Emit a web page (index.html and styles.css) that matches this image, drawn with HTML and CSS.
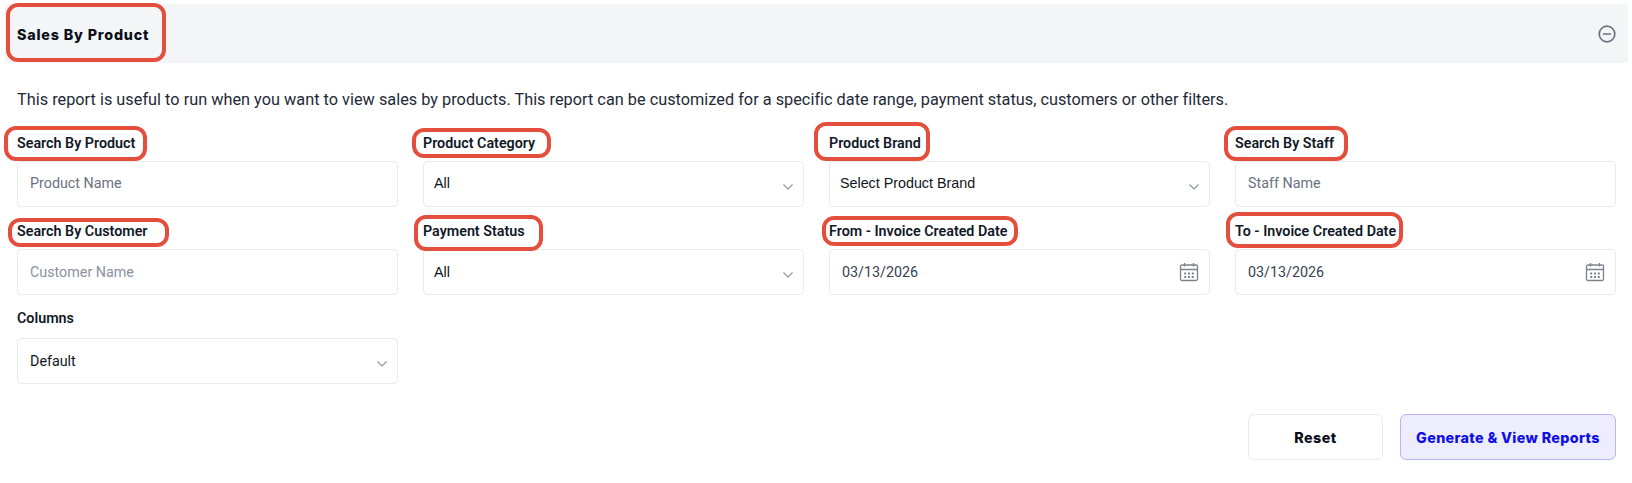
FILE: index.html
```html
<!DOCTYPE html>
<html lang="en">
<head>
<meta charset="utf-8">
<title>Sales By Product</title>
<link rel="stylesheet" href="styles.css">
</head>
<body>
<div class="page">
  <header class="panel-head">
    <h2 class="panel-title">Sales By Product</h2>
    <svg class="collapse-icon" viewBox="0 0 18 18" width="18" height="18" aria-hidden="true"><circle cx="9" cy="9" r="7.8"/><path d="M5.6 9h6.8"/></svg>
  </header>
  <p class="intro">This report is useful to run when you want to view sales by products. This report can be customized for a specific date range, payment status, customers or other filters.</p>
  <form class="filters">
    <div class="field row-one">
      <label class="field-label">Search By Product</label>
      <div class="control placeholder">Product Name</div>
    </div>
    <div class="field row-one">
      <label class="field-label">Product Category</label>
      <div class="control select arial">All
        <svg class="chevron" viewBox="0 0 12 8" width="12" height="8"><path d="M1.5 1.5 6 6l4.5-4.5"/></svg>
      </div>
    </div>
    <div class="field row-one">
      <label class="field-label">Product Brand</label>
      <div class="control select arial">Select Product Brand
        <svg class="chevron" viewBox="0 0 12 8" width="12" height="8"><path d="M1.5 1.5 6 6l4.5-4.5"/></svg>
      </div>
    </div>
    <div class="field row-one">
      <label class="field-label">Search By Staff</label>
      <div class="control placeholder">Staff Name</div>
    </div>
    <div class="field row-two">
      <label class="field-label">Search By Customer</label>
      <div class="control placeholder light">Customer Name</div>
    </div>
    <div class="field row-two">
      <label class="field-label">Payment Status</label>
      <div class="control select arial">All
        <svg class="chevron" viewBox="0 0 12 8" width="12" height="8"><path d="M1.5 1.5 6 6l4.5-4.5"/></svg>
      </div>
    </div>
    <div class="field row-two">
      <label class="field-label">From - Invoice Created Date</label>
      <div class="control date">03/13/2026
        <svg class="calendar" viewBox="0 0 20 20" width="20" height="20"><rect x="1.5" y="3" width="17" height="15.5" rx="1.5"/><path d="M1.5 7.5h17M5.5 1v3.5M14.5 1v3.5"/><path class="dots" d="M5.2 10.5h2v2h-2zM9 10.5h2v2H9zM12.8 10.5h2v2h-2zM5.2 14h2v2h-2zM9 14h2v2H9zM12.8 14h2v2h-2z"/></svg>
      </div>
    </div>
    <div class="field row-two">
      <label class="field-label">To - Invoice Created Date</label>
      <div class="control date">03/13/2026
        <svg class="calendar" viewBox="0 0 20 20" width="20" height="20"><rect x="1.5" y="3" width="17" height="15.5" rx="1.5"/><path d="M1.5 7.5h17M5.5 1v3.5M14.5 1v3.5"/><path class="dots" d="M5.2 10.5h2v2h-2zM9 10.5h2v2H9zM12.8 10.5h2v2h-2zM5.2 14h2v2h-2zM9 14h2v2H9zM12.8 14h2v2h-2z"/></svg>
      </div>
    </div>
    <div class="field row-three">
      <label class="field-label">Columns</label>
      <div class="control select dark">Default
        <svg class="chevron" viewBox="0 0 12 8" width="12" height="8"><path d="M1.5 1.5 6 6l4.5-4.5"/></svg>
      </div>
    </div>
  </form>
  <div class="actions">
    <button type="button" class="btn btn-reset">Reset</button>
    <button type="button" class="btn btn-primary">Generate &amp; View Reports</button>
  </div>
  <span class="mark mark-title"></span>
  <span class="mark mark-product"></span>
  <span class="mark mark-category"></span>
  <span class="mark mark-brand"></span>
  <span class="mark mark-staff"></span>
  <span class="mark mark-customer"></span>
  <span class="mark mark-payment"></span>
  <span class="mark mark-from"></span>
  <span class="mark mark-to"></span>
</div>
</body>
</html>
```
FILE: styles.css
```css
* { box-sizing: border-box; }
html, body { margin: 0; background: #fff; }
.page {
  position: relative;
  width: 1632px;
  height: 483px;
  padding: 4px 4px 0 5px;
  font-family: Roboto, sans-serif;
  color: #111827;
  overflow: hidden;
}
.panel-head {
  display: flex;
  align-items: center;
  justify-content: space-between;
  height: 59px;
  padding: 0 12px 0 12px;
  background: #f4f5f7;
  border-radius: 4px;
}
.panel-title {
  margin: 0 0 -1px;
  font-family: Inter, sans-serif;
  font-size: 14.3px;
  font-weight: 800;
  letter-spacing: .82px;
  color: #0b0f19;
}
.collapse-icon { fill: none; stroke: #6b7280; stroke-width: 1.7; stroke-linecap: round; }
.intro {
  margin: 26px 0 0 12px;
  font-size: 16.3px;
  letter-spacing: .012px;
  line-height: 22px;
  color: #1f2937;
}
.filters {
  display: grid;
  grid-template-columns: repeat(4, 381px);
  column-gap: 25px;
  margin: 21px 0 0 12px;
}
.field { display: flex; flex-direction: column; }
.field-label {
  height: 22px;
  font-size: 14.3px;
  font-weight: 600;
  line-height: 22px;
  color: #111827;
}
.control {
  position: relative;
  display: flex;
  align-items: center;
  height: 46px;
  margin-top: 7px;
  padding: 0 12px;
  border: 1px solid #e8eaed;
  border-radius: 5px;
  background: #fff;
  font-size: 14.3px;
  color: #111827;
  box-shadow: 0 0 1px rgba(0, 0, 0, .04);
}
.row-one .control { padding-bottom: 3px; }
.row-two { margin-top: 13px; }
.row-two .control { margin-top: 7px; }
.row-three { margin-top: 12px; }
.row-three .control { margin-top: 9px; }
.placeholder { color: #6b7280; }
.placeholder.light { color: #8b919c; }
.arial { font-family: "Liberation Sans", Arial, sans-serif; padding-left: 10px; color: #0f1420; }
.dark { color: #0f1420; }
.date { padding-left: 12px; color: #374151; }
.chevron { position: absolute; right: 9px; top: 21px; fill: none; stroke: #8f96a3; stroke-width: 1.2; }
.calendar { position: absolute; right: 10px; top: 12px; fill: none; stroke: #7c828c; stroke-width: 1.3; }
.calendar .dots { fill: #7c828c; stroke: none; }
.actions {
  display: flex;
  justify-content: flex-end;
  gap: 17px;
  margin: 30px 12px 0 0;
}
.btn {
  height: 46px;
  border-radius: 6px;
  font-family: Inter, sans-serif;
  font-size: 14.3px;
  font-weight: 800;
  cursor: pointer;
}
.btn-reset { width: 135px; background: #fff; border: 1px solid #e8eaed; color: #0b0f19; letter-spacing: .5px; }
.btn-primary { width: 216px; background: #ededfe; border: 1px solid #b4b4fb; color: #0f0fe6; letter-spacing: .35px; }
.mark {
  position: absolute;
  border: 4px solid #e34f3c;
  border-radius: 12px;
  pointer-events: none;
}
.mark-title { left: 6px; top: 3px; width: 160px; height: 59px; }
.mark-product { left: 4px; top: 126px; width: 143px; height: 35px; }
.mark-category { left: 412px; top: 128px; width: 139px; height: 30px; }
.mark-brand { left: 814px; top: 122px; width: 116px; height: 39px; }
.mark-staff { left: 1224px; top: 126px; width: 124px; height: 35px; }
.mark-customer { left: 8px; top: 218px; width: 161px; height: 29px; }
.mark-payment { left: 414px; top: 215px; width: 129px; height: 36px; }
.mark-from { left: 822px; top: 216px; width: 196px; height: 30px; }
.mark-to { left: 1226px; top: 212px; width: 177px; height: 36px; }
```
